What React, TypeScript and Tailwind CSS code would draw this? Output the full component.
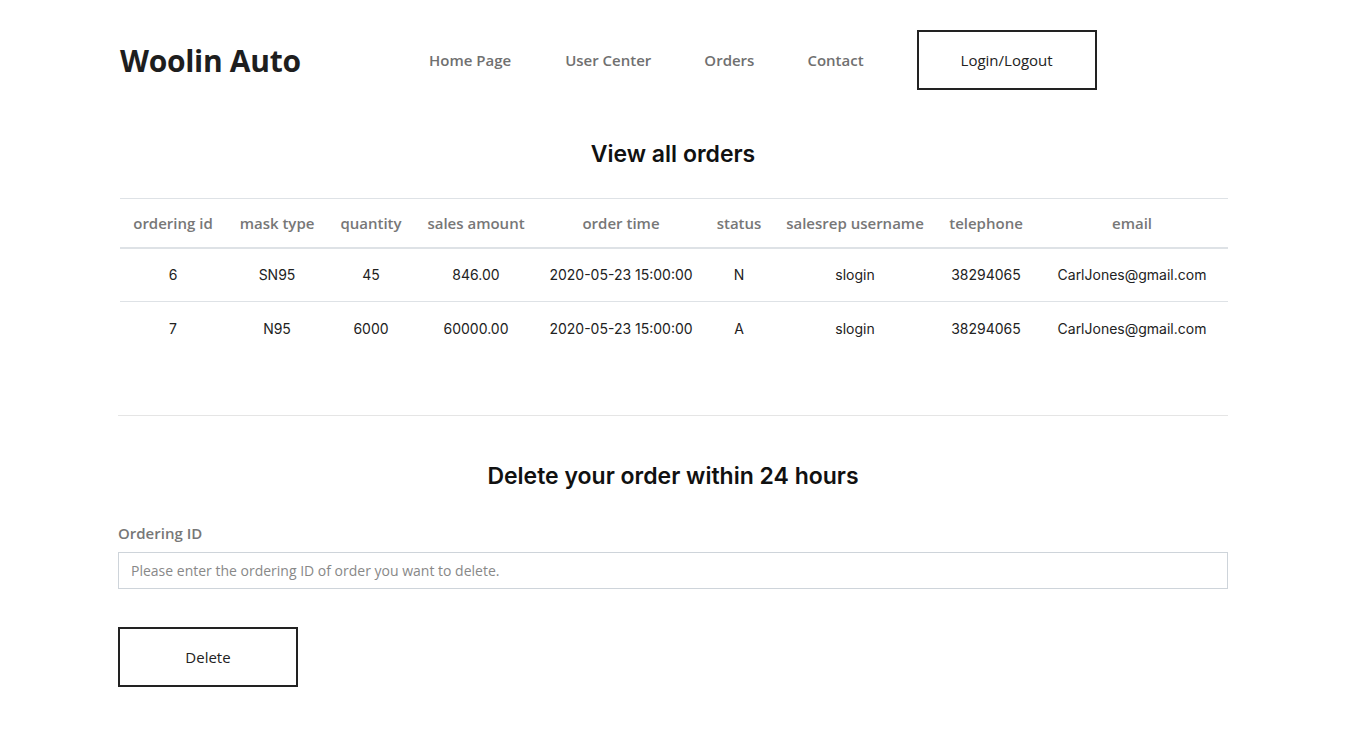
import React from "react";

const cols = [
  { h: "ordering id", w: "w-[106px]" },
  { h: "mask type", w: "w-[102px]" },
  { h: "quantity", w: "w-[86px]" },
  { h: "sales amount", w: "w-[124px]" },
  { h: "order time", w: "w-[166px]" },
  { h: "status", w: "w-[70px]" },
  { h: "salesrep username", w: "w-[162px]" },
  { h: "telephone", w: "w-[100px]" },
  { h: "email", w: "w-[192px]" },
];

const rows = [
  ["6", "SN95", "45", "846.00", "2020-05-23 15:00:00", "N", "slogin", "38294065", "CarlJones@gmail.com"],
  ["7", "N95", "6000", "60000.00", "2020-05-23 15:00:00", "A", "slogin", "38294065", "CarlJones@gmail.com"],
];

const ui = "font-['Open_Sans',_'Noto_Sans',_sans-serif]";
const pop = "font-['Inter',_'Noto_Sans',_sans-serif]";

export default function App() {
  return (
    <div className="min-h-[750px] w-full bg-white">
      <div className="mx-auto w-[1110px]">
        <header className="flex h-[120px] items-center">
          <div className={`${ui} ml-[2px] w-[309px] text-[30px] font-bold tracking-[-0.3px] text-[#1e1e1e]`}>Woolin Auto</div>
          <nav className={`${ui} flex items-center text-[15px] font-semibold text-[#707070]`}>
            <a className="mr-[54px]">Home Page</a>
            <a className="mr-[53px]">User Center</a>
            <a className="mr-[53px]">Orders</a>
            <a className="mr-[53px]">Contact</a>
            <button className="h-[60px] w-[180px] border-2 border-[#222] text-[15px] font-medium text-[#222]">Login/Logout</button>
          </nav>
        </header>

        <h2 className={`${pop} mt-[18px] text-center text-[23px] font-semibold leading-[32px] text-[#111]`}>View all orders</h2>

        <table className="ml-[2px] mt-[28px] w-[1108px] table-fixed border-collapse">
          <thead>
            <tr className="border-t border-[#dee2e6] border-b-2">
              {cols.map((c) => (
                <th key={c.h} className={`${c.w} ${ui} h-[49px] text-center text-[15px] font-semibold text-[#777]`}>{c.h}</th>
              ))}
            </tr>
          </thead>
          <tbody>
            {rows.map((r, i) => (
              <tr key={i} className={i === 0 ? "border-b border-[#dee2e6]" : ""}>
                {r.map((v, j) => (
                  <td key={j} className={`${pop} h-[54px] text-center text-[14px] text-[#222]`}>{v}</td>
                ))}
              </tr>
            ))}
          </tbody>
        </table>

        <div className="mt-[59px] border-t border-[#e5e5e5]" />

        <h2 className={`${pop} mt-[44px] text-center text-[23px] font-semibold leading-[32px] text-[#111]`}>Delete your order within 24 hours</h2>

        <label className={`${ui} mt-[30px] block text-[15px] font-semibold text-[#777]`}>Ordering ID</label>
        <input
          className={`${ui} mt-[8px] block h-[37px] w-full border border-[#ced4da] px-[12px] text-[14px] text-[#333] placeholder:text-[#888] outline-none`}
          placeholder="Please enter the ordering ID of order you want to delete."
        />
        <button className={`${ui} mt-[38px] h-[60px] w-[180px] border-2 border-[#222] text-[15px] font-medium text-[#222]`}>Delete</button>
      </div>
    </div>
  );
}
